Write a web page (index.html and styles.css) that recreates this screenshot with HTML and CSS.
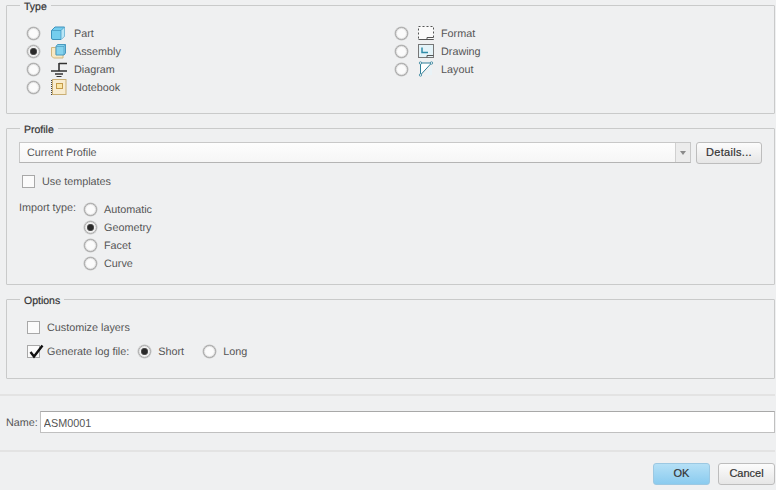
FILE: index.html
```html
<!DOCTYPE html>
<html lang="en">
  <head>
    <meta charset="UTF-8" />
    <title>New</title>
    <link rel="stylesheet" href="styles.css">
  </head>
  <body>
    <form class="dialog">
      <fieldset class="group group-type">
        <legend>Type</legend>
        <div class="type-columns">
          <div class="type-col">
            <label class="type-row"><input type="radio" name="type" />
              <svg class="icon" width="16" height="16" viewBox="0 0 16 16"><path d="M.500 5.500 4 2h9.500v9L10 14.500H2a1.500 1.500 0 0 1-1.500-1.500z" fill="#74cdee" stroke="#3f93bd"/><path d="M10 5.500 13.500 2v9L10 14.500z" fill="#b9e6f6"/><path d="M.500 5.500H10L13.500 2M10 5.500v9" fill="none" stroke="#3f93bd" stroke-width=".7"/></svg>
              <span>Part</span></label>
            <label class="type-row"><input type="radio" name="type" checked />
              <svg class="icon" width="16" height="16" viewBox="0 0 16 16"><path d="M.500 4.500H5v7h7v3.500H2.500l-2-2z" fill="#f7e8c4" stroke="#d0b67e"/><path d="M5 3.500 6.500 1.500h8v8.500L13 12H5z" fill="#84d3ee" stroke="#4a9ac0"/><path d="M13 3.500V12M5 3.500h8l1.500-2" fill="none" stroke="#4a9ac0" stroke-width=".7"/></svg>
              <span>Assembly</span></label>
            <label class="type-row"><input type="radio" name="type" />
              <svg class="icon" width="16" height="16" viewBox="0 0 16 16"><path d="M8 2.500h8M8 2v8M0 10h16" fill="none" stroke="#333" stroke-width="1.600"/><path d="M4 13h8" stroke="#333" stroke-width="1.500"/><path d="M5.500 15.500h5" stroke="#333"/></svg>
              <span>Diagram</span></label>
            <label class="type-row"><input type="radio" name="type" />
              <svg class="icon" width="16" height="16" viewBox="0 0 16 16"><rect x="1.500" y=".500" width="13.500" height="15" fill="#f8ecd0" stroke="#c9ae74"/><path d="M.500 1v15" stroke="#444" stroke-dasharray="1 1"/><rect x="5.500" y="4.500" width="6" height="5" fill="#fbe7a6" stroke="#c49a4a"/></svg>
              <span>Notebook</span></label>
          </div>
          <div class="type-col">
            <label class="type-row"><input type="radio" name="type" />
              <svg class="icon" width="16" height="16" viewBox="0 0 16 16"><rect x=".500" y="1.500" width="15" height="13" fill="#fafafa" stroke="#555" stroke-dasharray="2 2"/><path d="M9 12.500h6.500M9 12.500v2M.500 14.500h15" stroke="#555"/></svg>
              <span>Format</span></label>
            <label class="type-row"><input type="radio" name="type" />
              <svg class="icon" width="16" height="16" viewBox="0 0 16 16"><rect x=".500" y="1.500" width="15" height="13" fill="#e4f3f8" stroke="#777"/><path d="M4 4.500v5h6" fill="none" stroke="#2f8ca8" stroke-width="1.500"/><path d="M9 12.500h6.500M9 12.500v2" stroke="#555"/></svg>
              <span>Drawing</span></label>
            <label class="type-row"><input type="radio" name="type" />
              <svg class="icon" width="16" height="16" viewBox="0 0 16 16"><path d="M7 14 14 5v9z" fill="#eaf3f7"/><path d="M2.500 2H13.500L2.500 14z" fill="#fff" stroke="#2f7f98"/><circle cx="2.500" cy="2" r="1.200" fill="#fff" stroke="#2f7f98" stroke-width=".8"/><circle cx="13.500" cy="2" r="1.200" fill="#fff" stroke="#2f7f98" stroke-width=".8"/><circle cx="2.500" cy="14" r="1.200" fill="#fff" stroke="#2f7f98" stroke-width=".8"/></svg>
              <span>Layout</span></label>
          </div>
        </div>
      </fieldset>

      <fieldset class="group group-profile">
        <legend>Profile</legend>
        <div class="profile-row">
          <div class="select">
            <span class="select-text">Current Profile</span>
            <span class="select-arrow"></span>
          </div>
          <button type="button" class="btn btn-details">Details...</button>
        </div>
        <label class="check-row check-templates"><input type="checkbox" /><span>Use templates</span></label>
        <div class="import">
          <span class="import-label">Import type:</span>
          <div class="import-list">
            <label class="import-row"><input type="radio" name="import" /><span>Automatic</span></label>
            <label class="import-row"><input type="radio" name="import" checked /><span>Geometry</span></label>
            <label class="import-row"><input type="radio" name="import" /><span>Facet</span></label>
            <label class="import-row"><input type="radio" name="import" /><span>Curve</span></label>
          </div>
        </div>
      </fieldset>

      <fieldset class="group group-options">
        <legend>Options</legend>
        <label class="check-row"><input type="checkbox" /><span>Customize layers</span></label>
        <div class="log-row">
          <label class="check-row"><input type="checkbox" checked /><span>Generate log file:</span></label>
          <label class="log-opt log-short"><input type="radio" name="log" checked /><span>Short</span></label>
          <label class="log-opt"><input type="radio" name="log" /><span>Long</span></label>
        </div>
      </fieldset>

      <div class="name-row">
        <label for="name">Name:</label>
        <input type="text" id="name" value="ASM0001" />
      </div>

      <div class="actions">
        <button type="submit" class="btn btn-ok">OK</button>
        <button type="button" class="btn">Cancel</button>
      </div>
    </form>
  </body>
</html>
```

FILE: styles.css
```css
*,
*::before,
*::after {
  box-sizing: border-box;
  margin: 0;
  padding: 0;
}
html,
body {
  height: 490px;
  overflow: hidden;
}
body {
  background: #eff0f1;
  color: #555;
  font-family: "Liberation Sans", Arial, sans-serif;
  font-size: 10.800px;
  text-rendering: geometricPrecision;
}
label {
  display: flex;
  align-items: center;
}
label span {
  margin-top: 2px;
}

/* group boxes */
.group {
  display: block;
  margin-left: 6px;
  margin-right: 1px;
  border: 1px solid #c9caca;
  border-radius: 1px;
}
.group legend {
  padding: 3px 4px 0 4px;
  color: #333;
  font-size: 10.500px;
  line-height: 14px;
  -webkit-text-stroke: 0.2px #333;
}
.group-type {
  height: 117px;
  margin-top: -3px;
  padding: 10px 0 0 20px;
}
.group-type legend,
.group-options legend {
  margin-left: -7px;
}
.group-profile {
  height: 165px;
  margin-top: 6px;
  padding: 5px 12px 0 12px;
}
.group-profile legend {
  margin-left: 1px;
}
.group-options {
  height: 88px;
  margin-top: 6px;
  padding: 10px 0 0 20px;
}

/* native controls redrawn */
input[type="radio"],
input[type="checkbox"] {
  appearance: none;
  flex: none;
  width: 13px;
  height: 13px;
  background: #fbfbfb;
  border: 1px solid #a8a8a8;
}
input[type="radio"] {
  border-radius: 50%;
  box-shadow: 0 0 0 0.500px #c4c4c4, inset 0 0 0 1px #e6e6e6;
}
input[type="radio"]:checked {
  background: radial-gradient(circle at 50% 50%, #2a2a2a 2.500px, #666 3.400px, #f4f4f4 4px);
}
input[type="checkbox"] {
  position: relative;
}
input[type="checkbox"]:checked::after {
  content: url("data:image/svg+xml,%3Csvg xmlns='http://www.w3.org/2000/svg' width='15' height='15'%3E%3Cpath d='M1.500 8l3.500 4.500L13.500 1.500' fill='none' stroke='%23111' stroke-width='2.400'/%3E%3C/svg%3E");
  position: absolute;
  left: 1px;
  top: -2px;
  width: 15px;
  height: 15px;
}

/* type */
.type-columns {
  display: flex;
}
.type-col {
  width: 368px;
}
.type-row {
  height: 18px;
}
.type-row .icon {
  flex: none;
  margin-left: 11px;
  overflow: visible;
}
.type-row span {
  margin-left: 7px;
}
.type-col + .type-col .type-row .icon {
  margin-left: 10px;
}

/* profile */
.profile-row {
  display: flex;
  gap: 5px;
}
.select {
  display: flex;
  flex: 0 0 672px;
  height: 21px;
  background: linear-gradient(#fdfdfd, #f6f6f6);
  border: 1px solid #c8c8c8;
  border-bottom-color: #b4b4b4;
}
.select-text {
  flex: 1;
  padding-left: 7px;
  line-height: 21px;
}
.select-arrow {
  position: relative;
  width: 15px;
  background: #ececec;
  border-left: 1px solid #d0d0d0;
}
.select-arrow::after {
  content: "";
  position: absolute;
  left: 4px;
  top: 8px;
  border: 3.500px solid transparent;
  border-top: 4px solid #8a8a8a;
  border-bottom: 0;
}
.btn {
  height: 22px;
  width: 57px;
  padding-bottom: 2px;
  background: linear-gradient(#fcfcfc, #e6e6e6);
  border: 1px solid #bdbdbd;
  border-radius: 3px;
  color: #333;
  font: 11px "Liberation Sans", Arial, sans-serif;
  -webkit-text-stroke: 0.2px #333;
}
.btn-details {
  width: 66px;
  letter-spacing: 0.300px;
}
.check-row {
  height: 18px;
}
.check-row span {
  margin-left: 7px;
}
.check-templates {
  margin: 8px 0 0 3px;
}
.import {
  display: flex;
  margin-top: 9px;
}
.import-label {
  width: 65px;
  margin-top: 2px;
  line-height: 14px;
}
.import-list {
  margin-top: 1px;
}
.import-row {
  height: 18px;
}
.import-row span {
  margin-left: 7px;
}

/* options */
.log-row {
  display: flex;
  margin-top: 6px;
}
.log-opt span {
  margin-left: 7px;
}
.log-short {
  margin-left: 9px;
  width: 65px;
}

/* bottom */
.name-row {
  display: flex;
  align-items: center;
  gap: 2px;
  margin: 15px 1px 0 0;
  padding: 15px 0 17px 6px;
  border-top: 2px solid #e3e3e3;
  border-bottom: 2px solid #e3e3e3;
}
.name-row label {
  padding-top: 2px;
}
.name-row input {
  flex: 1;
  height: 22px;
  padding: 2px 3px 0;
  background: #fff;
  border: 1px solid #c0c0c0;
  border-top-color: #a8a8a8;
  color: #555;
  font: 10.800px "Liberation Sans", Arial, sans-serif;
}
.actions {
  display: flex;
  justify-content: flex-end;
  gap: 8px;
  margin-top: 11px;
  padding-right: 1px;
}
.btn-ok {
  background: linear-gradient(#b5e0f6, #8acbef);
  border-color: #9cc8e2;
}
```
